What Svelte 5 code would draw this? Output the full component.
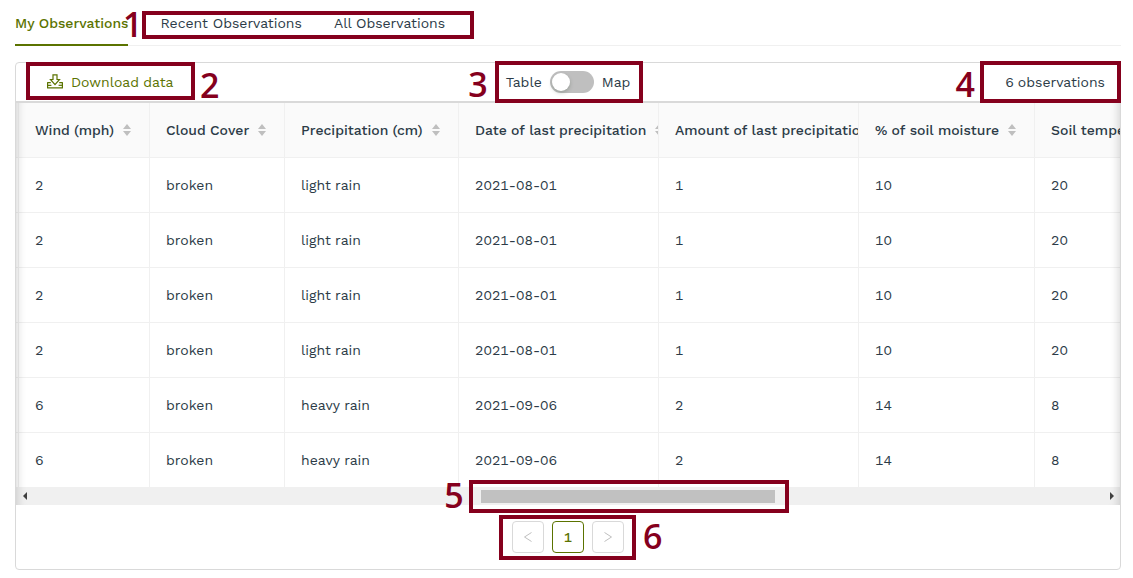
<script lang="ts">
	const tabs = ['Recent Observations', 'All Observations'];

	const columns = [
		{ label: 'Wind (mph)', width: 131 },
		{ label: 'Cloud Cover', width: 135 },
		{ label: 'Precipitation (cm)', width: 174 },
		{ label: 'Date of last precipitation', width: 200 },
		{ label: 'Amount of last precipitation', width: 200 },
		{ label: '% of soil moisture', width: 176 },
		{ label: 'Soil temperature', width: 200 }
	];

	const light = ['2', 'broken', 'light rain', '2021-08-01', '1', '10', '20'];
	const heavy = ['6', 'broken', 'heavy rain', '2021-09-06', '2', '14', '8'];
	const rows = [light, light, light, light, heavy, heavy];

	let showMap = $state(false);
	let scroll = $state(448);
</script>

<main class="page">
	<nav class="tabs" aria-label="Observations">
		<button class="tab tab--active">My Observations</button>
		<div class="tabs__rest">
			{#each tabs as tab (tab)}
				<button class="tab">{tab}</button>
			{/each}
			<span class="callout callout--tabs"><b>1</b></span>
		</div>
	</nav>

	<section class="card">
		<header class="toolbar">
			<div class="toolbar__side">
				<button class="download">
					<svg width="16" height="16" viewBox="0 0 16 16" fill="none" stroke="currentColor" stroke-width="1.2" aria-hidden="true">
						<path d="M6 .8h4v4.700h2.500L8 10.600 3.500 5.500H6z" />
						<path d="M3.800 8.700H.6v5.200h14.800V8.700h-3.200M.6 11.300h3.800" stroke-linejoin="round" />
						<path d="M11.600 11.300h3.800" />
					</svg>
					Download data
				</button>
				<span class="callout callout--download"><b>2</b></span>
			</div>
			<div class="toggle">
				<label for="view">Table</label>
				<input id="view" class="switch" type="checkbox" role="switch" bind:checked={showMap} />
				<label for="view">Map</label>
				<span class="callout callout--toggle"><b>3</b></span>
			</div>
			<div class="toolbar__side toolbar__side--end">
				<span>6 observations</span>
				<span class="callout callout--count"><b>4</b></span>
			</div>
		</header>

		<div class="grid">
			<div class="grid__view">
				<table>
					<colgroup>
						<col class="edge" />
						{#each columns as column (column.label)}
							<col style="width: {column.width}px" />
						{/each}
					</colgroup>
					<thead>
						<tr>
							<td class="edge"></td>
							{#each columns as column (column.label)}
								<th scope="col">
									<span class="heading">
										{column.label}
										<svg width="8" height="14" viewBox="0 0 8 14" fill="#bfbfbf" aria-hidden="true">
											<path d="M4 1l4 5H0zM4 13L0 8h8z" />
										</svg>
									</span>
								</th>
							{/each}
						</tr>
					</thead>
					<tbody>
						{#each rows as row, i (i)}
							<tr>
								<td class="edge"></td>
								{#each row as value, j (j)}
									<td>{value}</td>
								{/each}
							</tr>
						{/each}
					</tbody>
				</table>
			</div>
			<div class="scrollbar">
				<button class="scrollbar__arrow" aria-label="Scroll left">
					<svg width="4" height="8" viewBox="0 0 4 8"><path d="M4 0v8L0 4z" fill="#404040" /></svg>
				</button>
				<input type="range" aria-label="Scroll table" min="0" max="776" bind:value={scroll} />
				<button class="scrollbar__arrow" aria-label="Scroll right">
					<svg width="4" height="8" viewBox="0 0 4 8"><path d="M0 0v8l4-4z" fill="#404040" /></svg>
				</button>
				<span class="callout callout--scroll"><b>5</b></span>
			</div>
		</div>

		<footer class="pagination">
			<div class="pages">
				<button class="page-button" disabled aria-label="Previous page">
					<svg width="10" height="12" viewBox="0 0 10 12" fill="none" stroke="currentColor"><path d="M8.500 1.500L1.500 6l7 4.500" /></svg>
				</button>
				<button class="page-button page-button--current">1</button>
				<button class="page-button" disabled aria-label="Next page">
					<svg width="10" height="12" viewBox="0 0 10 12" fill="none" stroke="currentColor"><path d="M1.500 1.500l7 4.500-7 4.500" /></svg>
				</button>
				<span class="callout callout--pages"><b>6</b></span>
			</div>
		</footer>
	</section>
</main>

<style>
	:global(body) {
		margin: 0;
		background: #fff;
	}

	.page {
		padding: 0 12px 8px 15px;
		font: 14px/22px 'Work Sans', Inter, sans-serif;
		color: #2c3b47;
	}

	button {
		padding: 0;
		border: 0;
		background: none;
		font: inherit;
		color: inherit;
		cursor: pointer;
	}

	.tabs {
		display: flex;
		gap: 32px;
		margin-bottom: 16px;
		box-shadow: inset 0 -1px #f0f0f0;
	}

	.tabs__rest {
		position: relative;
		display: flex;
		gap: 32px;
	}

	.tab {
		padding: 12px 0;
		white-space: nowrap;
	}

	.tab--active {
		color: #5b7300;
		font-weight: 500;
		box-shadow: inset 0 -2px #5b7300;
	}

	.card {
		border: 1px solid #d9d9d9;
		border-radius: 4px;
		font-variant-numeric: tabular-nums;
	}

	.toolbar {
		display: grid;
		grid-template-columns: 1fr auto 1fr;
		align-items: center;
		height: 38px;
	}

	.toolbar__side {
		position: relative;
		display: flex;
		align-items: center;
		height: 38px;
		padding-left: 31px;
	}

	.toolbar__side--end {
		justify-content: flex-end;
		padding: 0 15px 0 0;
	}

	.download {
		display: flex;
		align-items: center;
		gap: 8px;
		color: #5b7300;
	}

	.toggle {
		position: relative;
		display: flex;
		align-items: center;
		gap: 8px;
		height: 38px;
	}

	.switch {
		appearance: none;
		width: 44px;
		height: 22px;
		margin: 0;
		padding: 2px;
		border-radius: 11px;
		background: #bfbfbf;
		cursor: pointer;
	}

	.switch::before {
		content: '';
		display: block;
		width: 18px;
		height: 18px;
		border-radius: 50%;
		background: #fff;
		box-shadow: 0 2px 4px rgba(0, 35, 11, 0.2);
	}

	.switch:checked {
		background: #5b7300;
	}

	.switch:checked::before {
		margin-left: auto;
	}

	.grid {
		position: relative;
		border-top: 2px solid #d9d9d9;
	}

	/* Edge shadows hint at the columns scrolled out of view */
	.grid::before,
	.grid::after {
		content: '';
		position: absolute;
		z-index: 1;
		top: 0;
		bottom: 0;
		width: 30px;
		pointer-events: none;
	}

	.grid::before {
		left: 0;
		box-shadow: inset 10px 0 8px -8px rgba(0, 0, 0, 0.15);
	}

	.grid::after {
		right: 0;
		box-shadow: inset -10px 0 8px -8px rgba(0, 0, 0, 0.15);
	}

	.grid__view {
		overflow: hidden;
	}

	table {
		width: 1219px;
		min-width: 100%;
		table-layout: fixed;
		border-collapse: separate;
		border-spacing: 0;
	}

	th,
	td {
		box-sizing: border-box;
		height: 55px;
		padding: 0 16px;
		border-right: 1px solid #f0f0f0;
		border-bottom: 1px solid #f0f0f0;
		text-align: left;
		white-space: nowrap;
	}

	tbody tr:last-child td {
		height: 54px;
		border-bottom: 0;
	}

	thead th,
	thead td {
		padding-right: 0;
		background: #fafafa;
		font-weight: 500;
		color: #2c3b47;
		overflow: hidden;
	}

	.edge {
		width: 3px;
		padding: 0;
	}

	.heading {
		display: flex;
		align-items: center;
		gap: 9px;
	}

	.heading svg {
		flex: none;
	}

	.scrollbar {
		position: relative;
		display: flex;
		height: 18px;
		background: #f0f0f0;
	}

	.scrollbar__arrow {
		display: flex;
		align-items: center;
		justify-content: center;
		width: 17px;
	}

	.scrollbar input {
		appearance: none;
		flex: 1;
		min-width: 0;
		margin: 0;
		background: none;
	}

	.scrollbar input::-webkit-slider-thumb {
		appearance: none;
		width: 294px;
		height: 13px;
		background: #c1c1c1;
	}

	.pagination {
		display: flex;
		justify-content: center;
		padding: 16px 0;
	}

	.pages {
		position: relative;
		display: flex;
		gap: 8px;
	}

	.page-button {
		display: flex;
		align-items: center;
		justify-content: center;
		width: 32px;
		height: 32px;
		border: 1px solid #d9d9d9;
		border-radius: 4px;
		color: #bfbfbf;
		font-variant-numeric: tabular-nums;
	}

	.page-button--current {
		border-color: #5b7300;
		color: #5b7300;
		font-weight: 500;
	}

	/* Numbered callouts drawn over the interface */
	.callout {
		position: absolute;
		z-index: 2;
		border: 4px solid #85001d;
		color: #85001d;
		pointer-events: none;
	}

	.callout b {
		position: absolute;
		font: 600 34px/34px 'Open Sans', sans-serif;
	}

	.callout--tabs {
		inset: 11px -29px 7px -18px;
	}

	.callout--tabs b {
		right: 100%;
		top: -8px;
		margin-right: 4px;
	}

	.callout--download {
		top: -1px;
		left: 10px;
		width: 161px;
		height: 30px;
	}

	.callout--download b {
		left: 100%;
		top: 2px;
		margin-left: 9px;
	}

	.callout--toggle {
		inset: -2px -13px -2px -11px;
	}

	.callout--toggle b {
		right: 100%;
		top: 2px;
		margin-right: 11px;
	}

	.callout--count {
		top: -2px;
		right: -1px;
		width: 133px;
		height: 34px;
	}

	.callout--count b {
		right: 100%;
		top: 2px;
		margin-right: 9px;
	}

	.callout--scroll {
		top: -7px;
		left: 41%;
		width: 312px;
		height: 25px;
	}

	.callout--scroll b {
		right: 100%;
		top: -6px;
		margin-right: 9px;
	}

	.callout--pages {
		inset: -6px -12px -7px -13px;
	}

	.callout--pages b {
		left: 100%;
		top: 0;
		margin-left: 11px;
	}
</style>
